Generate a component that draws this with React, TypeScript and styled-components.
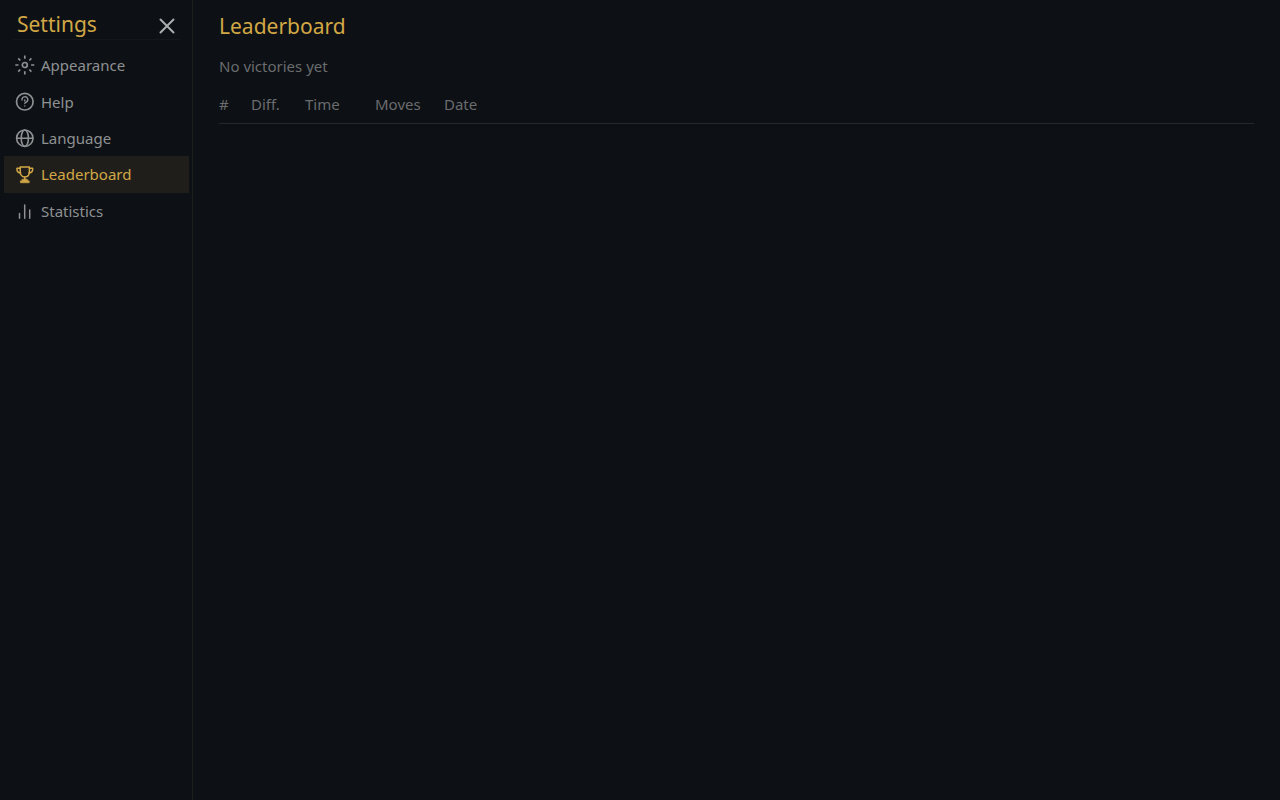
import React from "react";
import styled, { createGlobalStyle } from "styled-components";

const GlobalStyle = createGlobalStyle`
  *, *::before, *::after { box-sizing: border-box; }
  body {
    margin: 0;
    background: #0d1014;
    color: #8e9092;
    font: 15px/20px "Noto Sans", sans-serif;
  }
`;

const Page = styled.div`
  display: flex;
  min-height: 100vh;
`;

const Sidebar = styled.aside`
  flex: none;
  width: 193px;
  padding: 0 3px 0 4px;
  border-right: 1px solid #1e1f1d;
`;

const SidebarHeader = styled.header`
  display: flex;
  align-items: center;
  justify-content: space-between;
  height: 40px;
  margin: 0 9px 7px;
  padding: 8px 5px 0 4px;
  border-bottom: 1px solid #15181a;
`;

const SidebarTitle = styled.h2`
  margin: 0;
  color: #d2a846;
  font-size: 21px;
  line-height: 30px;
  font-weight: 400;
`;

const CloseButton = styled.button`
  display: flex;
  padding: 4px 0 0;
  border: 0;
  background: none;
  color: #abadae;
  cursor: pointer;
`;

const Nav = styled.nav`
  display: grid;
  grid-auto-rows: 1fr;
  min-height: 182px;
`;

const NavItem = styled.button<{ $active?: boolean }>`
  display: flex;
  align-items: center;
  gap: 6px;
  min-height: 36px;
  padding: 0 11px;
  border: 0;
  background: ${(p) => (p.$active ? "#1f1e1b" : "transparent")};
  color: ${(p) => (p.$active ? "#d2a846" : "#8e9092")};
  font: inherit;
  text-align: left;
  cursor: pointer;
`;

const Icon = styled.svg`
  flex: none;
  display: block;
  fill: none;
  stroke: currentColor;
  stroke-linecap: round;
  stroke-linejoin: round;
`;

const Content = styled.main`
  flex: 1;
  min-width: 0;
  padding: 11px 26px;
`;

const Title = styled.h1`
  margin: 0;
  color: #d2a846;
  font-size: 21px;
  line-height: 30px;
  font-weight: 400;
`;

const EmptyNote = styled.p`
  margin: 15px 0 18px;
  color: #6a6c6f;
`;

const Table = styled.table`
  width: 100%;
  table-layout: fixed;
  border-collapse: collapse;
`;

const HeadCell = styled.th<{ $width?: number }>`
  width: ${(p) => (p.$width ? `${p.$width}px` : "auto")};
  padding: 0 0 9px;
  border-bottom: 1px solid #24282b;
  color: #6a6c6f;
  font-weight: 400;
  text-align: left;
`;

const AppearanceIcon = () => (
  <Icon width="20" height="20" viewBox="0 0 20 20" strokeWidth="1.7" aria-hidden="true">
    <circle cx="9.8" cy="10" r="2.5" />
    <path
      d="M9.8 .5v3.2M9.8 16.3v3.2M.3 10h3.2M16.1 10h3.2M3.2 3.4l2.1 2.1M14.3 14.5l2.1 2.1M3.2 16.6l2.1-2.1M14.3 5.5l2.1-2.1"
      strokeLinecap="butt"
    />
  </Icon>
);

const HelpIcon = () => (
  <Icon width="20" height="20" viewBox="0 0 20 20" strokeWidth="1.7" aria-hidden="true">
    <circle cx="9.8" cy="9.7" r="8.3" />
    <path d="M7 8A2.9 2.9 0 1 1 11.2 10.2C10.2 10.7 9.8 10.9 9.8 11.5M9.8 13.9v.2M9.8 7.9v1.2" strokeWidth="1.4" />
  </Icon>
);

const LanguageIcon = () => (
  <Icon width="20" height="20" viewBox="0 0 20 20" strokeWidth="1.6" aria-hidden="true">
    <circle cx="9.8" cy="10.2" r="8.2" />
    <ellipse cx="9.8" cy="10.2" rx="3.6" ry="8.2" />
    <path d="M1.8 10.2h16" />
  </Icon>
);

const TrophyIcon = () => (
  <Icon width="20" height="20" viewBox="0 0 20 20" strokeWidth="1.5" aria-hidden="true">
    <path d="M5.2 3h9.2v4.4c0 3.2-1.5 5.5-4.6 5.5S5.2 10.6 5.2 7.4z" />
    <path d="M5.2 4.3H2c-.5 2.7.6 4.4 3.6 4.8M14.5 4.3h3.1c.5 2.7-.6 4.4-3.6 4.8M9.8 12.9v2.5" />
    <path d="M7.2 15.2h5.2v1.6h1.8v2H5.4v-2h1.8z" fill="currentColor" strokeWidth=".6" />
  </Icon>
);

const StatisticsIcon = () => (
  <Icon width="20" height="20" viewBox="0 0 20 20" strokeWidth="1.5" aria-hidden="true">
    <path d="M4.5 12.5v4.7M9.7 4v13.2M14.7 9v8.2" />
  </Icon>
);

const sections = [
  { label: "Appearance", Glyph: AppearanceIcon },
  { label: "Help", Glyph: HelpIcon },
  { label: "Language", Glyph: LanguageIcon },
  { label: "Leaderboard", Glyph: TrophyIcon },
  { label: "Statistics", Glyph: StatisticsIcon },
];

const columns = [
  { label: "#", width: 32 },
  { label: "Diff.", width: 54 },
  { label: "Time", width: 70 },
  { label: "Moves", width: 69 },
  { label: "Date" },
];

export default function App() {
  const active = "Leaderboard";
  return (
    <>
      <GlobalStyle />
      <Page>
        <Sidebar>
          <SidebarHeader>
            <SidebarTitle>Settings</SidebarTitle>
            <CloseButton type="button" aria-label="Close">
              <Icon width="16" height="16" viewBox="0 0 16 16" strokeWidth="2" aria-hidden="true">
                <path d="M1.5 1.5l13 13M14.5 1.5l-13 13" />
              </Icon>
            </CloseButton>
          </SidebarHeader>
          <Nav aria-label="Settings">
            {sections.map(({ label, Glyph }) => (
              <NavItem
                key={label}
                type="button"
                $active={label === active}
                aria-current={label === active ? "page" : undefined}
              >
                <Glyph />
                {label}
              </NavItem>
            ))}
          </Nav>
        </Sidebar>
        <Content>
          <Title>Leaderboard</Title>
          <EmptyNote>No victories yet</EmptyNote>
          <Table>
            <thead>
              <tr>
                {columns.map((c) => (
                  <HeadCell key={c.label} scope="col" $width={c.width}>
                    {c.label}
                  </HeadCell>
                ))}
              </tr>
            </thead>
          </Table>
        </Content>
      </Page>
    </>
  );
}
